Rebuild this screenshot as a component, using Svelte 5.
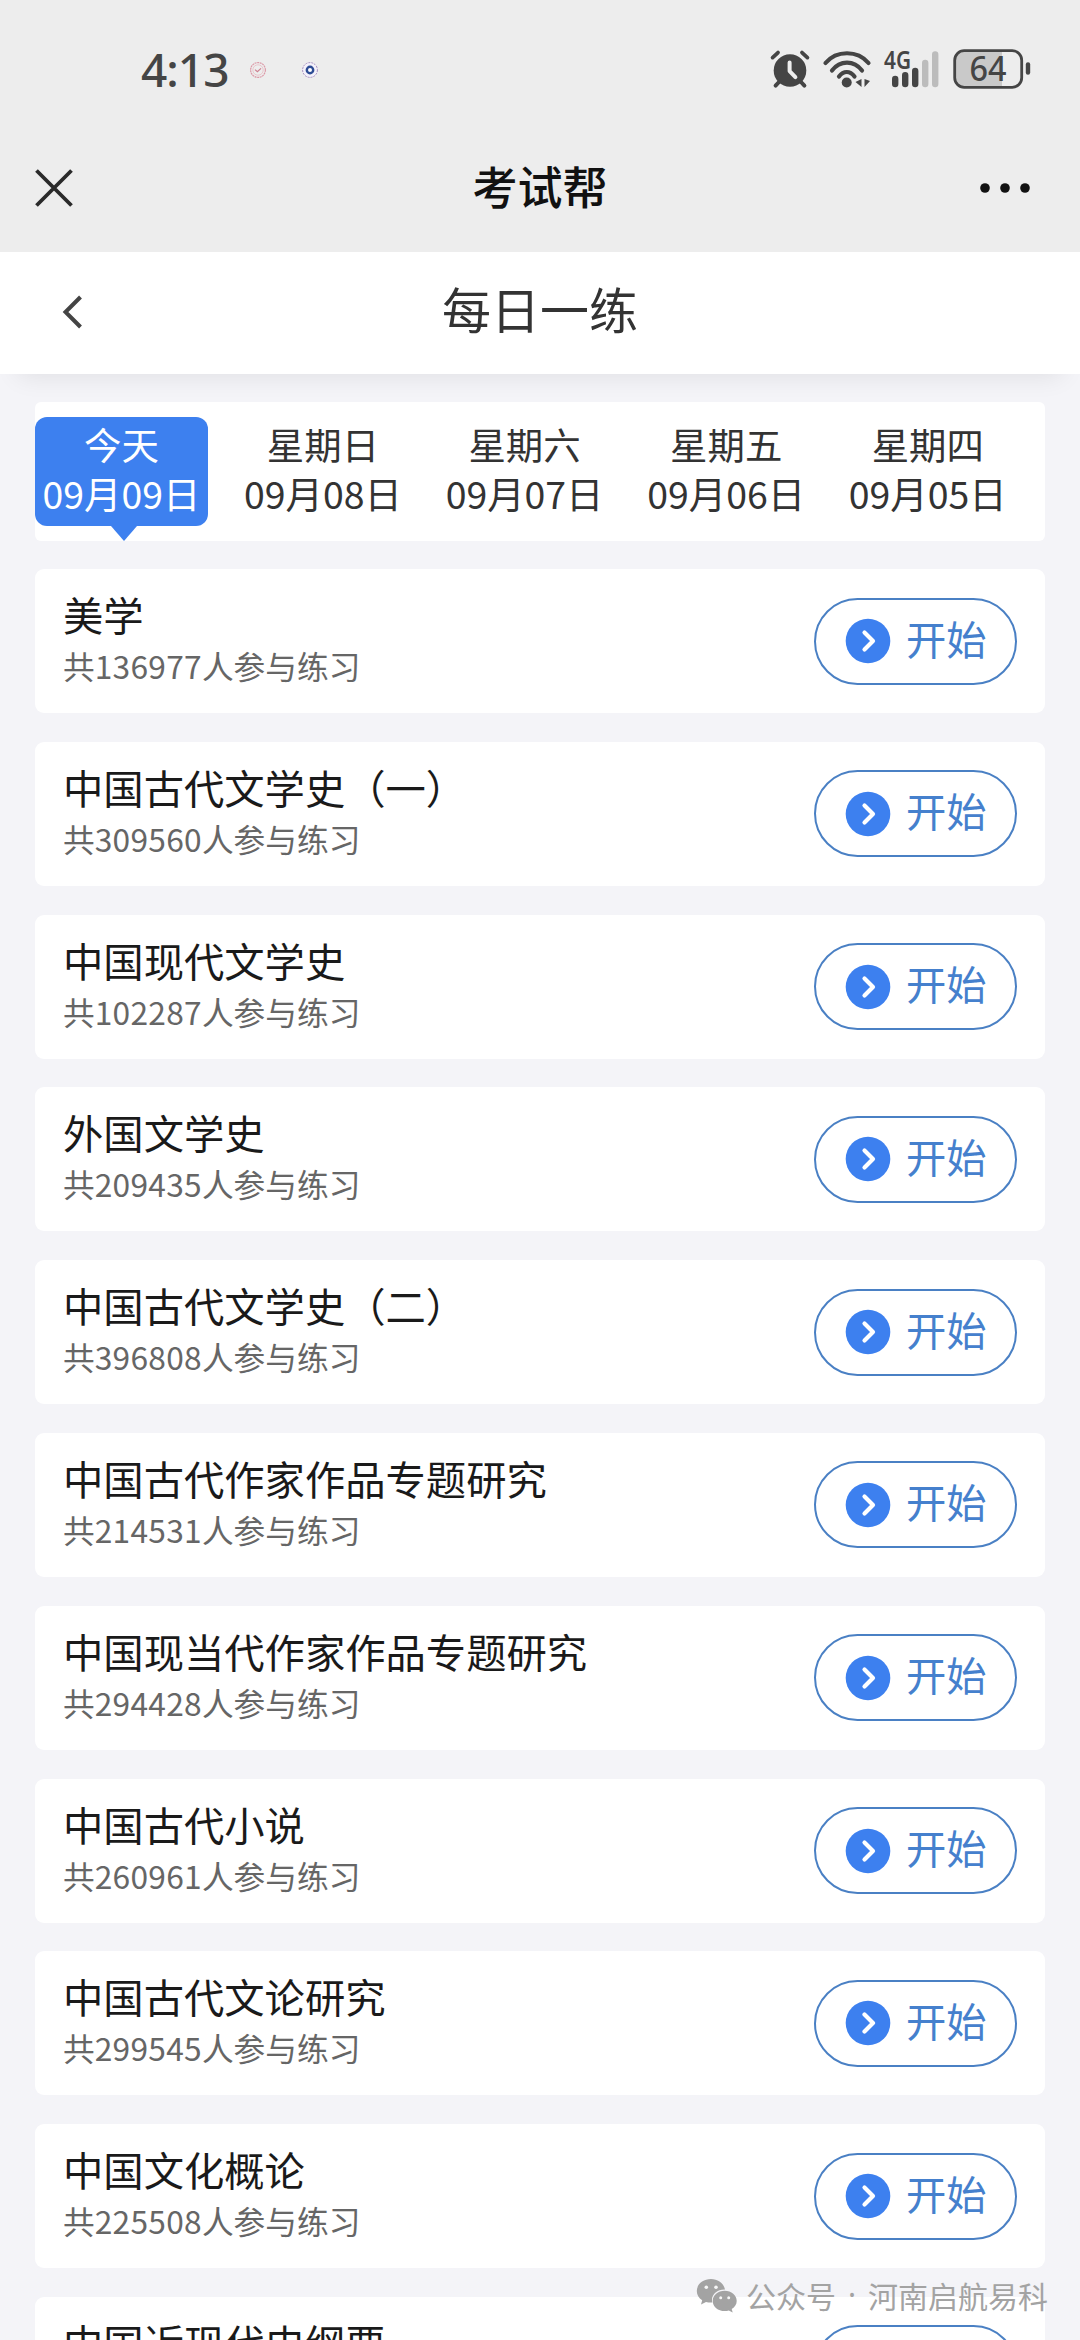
<script>
	const days = [
		{ name: '今天', date: '09月09日' },
		{ name: '星期日', date: '09月08日' },
		{ name: '星期六', date: '09月07日' },
		{ name: '星期五', date: '09月06日' },
		{ name: '星期四', date: '09月05日' }
	];

	const courses = [
		{ title: '美学', count: 136977 },
		{ title: '中国古代文学史（一）', count: 309560 },
		{ title: '中国现代文学史', count: 102287 },
		{ title: '外国文学史', count: 209435 },
		{ title: '中国古代文学史（二）', count: 396808 },
		{ title: '中国古代作家作品专题研究', count: 214531 },
		{ title: '中国现当代作家作品专题研究', count: 294428 },
		{ title: '中国古代小说', count: 260961 },
		{ title: '中国古代文论研究', count: 299545 },
		{ title: '中国文化概论', count: 225508 },
		{ title: '中国近现代史纲要' }
	];

	let selected = $state(0);
</script>

<div class="page">
	<div class="status-bar">
		<span class="time">4:13</span>
		<svg class="notice" width="18" height="18" viewBox="0 0 18 18" fill="none">
			<circle cx="9" cy="9" r="7.4" stroke="#dc9aa8" stroke-width="1.2" stroke-dasharray="2 .6" />
			<circle cx="9" cy="9" r="5.2" stroke="#e9bcc4" stroke-width="0.8" />
			<path d="M6 8.6l2.4 2.2L12 7.4" stroke="#cf7f90" stroke-width="1.2" />
		</svg>
		<svg class="notice second" width="18" height="18" viewBox="0 0 18 18" fill="none">
			<circle cx="9" cy="9" r="7.4" fill="#f4f1fa" stroke="#a58fc0" stroke-width="1" stroke-dasharray="2 1" />
			<circle cx="9" cy="9" r="3.2" fill="#fff" stroke="#2d4c94" stroke-width="2.4" />
		</svg>

		<div class="status-icons">
			<svg width="40" height="40" viewBox="0 0 40 40" fill="none" stroke="#454545" stroke-linecap="round">
				<circle cx="20" cy="21.5" r="16.3" fill="#454545" stroke="none" />
				<path d="M2.6 8.6L8 3.6M37.4 8.6L32 3.6" stroke-width="3.8" />
				<path d="M9 33l-3.4 3.6M31 33l3.4 3.6" stroke-width="4" />
				<path d="M19.6 13.5v8.6l5.8 6" stroke="#eee" stroke-width="4" stroke-linejoin="round" />
			</svg>
			<svg class="wifi" width="48" height="38" viewBox="0 0 48 38" fill="none" stroke="#454545" stroke-linecap="round">
				<path d="M2.500 13C13.500 0 34.500 0 45.500 13" stroke-width="4.200" />
				<path d="M9 20.500C17 10 31 10 39 20.500" stroke-width="4.200" />
				<path d="M16 26.500C20.500 20.500 27 20.500 31.500 26.500" stroke-width="4.200" />
				<circle cx="23.700" cy="32.500" r="5" fill="#454545" stroke="none" />
				<path d="M38.500 29v8l-6-5zM41.500 29v8l5.500-6z" fill="#454545" stroke="none" />
			</svg>
			<svg class="signal" width="56" height="38" viewBox="0 0 56 38">
				<text x="0" y="19" textLength="27" lengthAdjust="spacingAndGlyphs">4G</text>
				<g stroke-width="6.400" stroke-linecap="round">
					<path d="M11.200 29v5M21.200 25.200v8.800M31.200 21v13" stroke="#454545" />
					<path d="M41.200 13v21M51.200 4.500v29.500" stroke="#bcbcbc" />
				</g>
			</svg>
			<svg class="battery" width="78" height="40" viewBox="0 0 78 40">
				<path d="M10 2.500h39v35H10a8 8 0 0 1-8-8v-19a8 8 0 0 1 8-8z" fill="#c9c9c9" />
				<rect x="1.700" y="1.700" width="67" height="36.600" rx="9.500" fill="none" stroke="#454545" stroke-width="2.800" />
				<path d="M75 15.500v8" stroke="#454545" stroke-width="4.400" stroke-linecap="round" />
				<text x="16.500" y="32" textLength="37" lengthAdjust="spacingAndGlyphs">64</text>
			</svg>
		</div>
	</div>

	<header class="app-bar">
		<button class="icon-button close" aria-label="关闭">
			<svg width="40" height="40" viewBox="0 0 40 40" fill="none" stroke="#2a2a2a" stroke-width="3.800">
				<path d="M2.500 2.500l35 35M37.500 2.500l-35 35" />
			</svg>
		</button>
		<h1>考试帮</h1>
		<button class="icon-button more" aria-label="更多">
			<svg width="52" height="12" viewBox="0 0 52 12" fill="#111">
				<circle cx="6" cy="6" r="4.800" />
				<circle cx="26" cy="6" r="4.800" />
				<circle cx="46" cy="6" r="4.800" />
			</svg>
		</button>
	</header>

	<header class="nav-bar">
		<button class="icon-button back" aria-label="返回">
			<svg width="22" height="36" viewBox="0 0 22 36" fill="none" stroke="#444" stroke-width="4">
				<path d="M19.500 3L4.500 18l15 15" />
			</svg>
		</button>
		<h2>每日一练</h2>
	</header>

	<main>
		<div class="days">
			{#each days as day, i}
				<button class="day" class:active={selected === i} onclick={() => (selected = i)}>
					<span>{day.name}</span>
					<span>{day.date}</span>
				</button>
			{/each}
		</div>

		<ul class="courses">
			{#each courses as course}
				<li class="course">
					<div class="info">
						<h3>{course.title}</h3>
						<p>
							{#if course.count}共<span class="count">{course.count}</span>人参与练习{/if}
						</p>
					</div>
					<button class="start">
						<svg width="46" height="46" viewBox="0 0 46 46" fill="none">
							<circle cx="23" cy="23" r="22.300" fill="#3d80ef" />
							<path d="M19.500 14.500l8.500 8.500-8.500 8.500" stroke="#fff" stroke-width="4.200" stroke-linecap="round" stroke-linejoin="round" />
						</svg>
						<span>开始</span>
					</button>
				</li>
			{/each}
		</ul>
	</main>

	<div class="watermark">
		<svg width="42" height="34" viewBox="0 0 42 34" fill="#a3a3a3">
			<path d="M15 1C7 1 .8 6.200.8 13c0 3.900 2 7 5.400 9.300L5 26.500l5-2.600c1.600.5 3.300.7 5 .7h1.300C14.500 17 21 11.200 29 11.600 27.800 5.400 22 1 15 1z" />
			<path d="M28.700 12.800c-6.700 0-12 4.500-12 10.100s5.300 10.100 12 10.100c1.400 0 2.800-.2 4.100-.6l3.900 2-1-3.400c3.100-2 5-4.800 5-8.100 0-5.600-5.300-10.100-12-10.100z" />
			<g fill="#f7f7f7">
				<circle cx="10.300" cy="9.300" r="1.800" />
				<circle cx="20" cy="9.300" r="1.800" />
				<circle cx="24.700" cy="19.700" r="1.500" />
				<circle cx="32.700" cy="19.700" r="1.500" />
			</g>
		</svg>
		<span>公众号</span>
		<span class="dot">·</span>
		<span>河南启航易科</span>
	</div>
</div>

<style>
	:global(body) {
		margin: 0;
	}

	.page {
		position: relative;
		width: 1080px;
		height: 2340px;
		overflow: hidden;
		background: #f4f4f8;
		color: #333;
		font-family: 'Noto Sans CJK SC', sans-serif;
	}

	h1,
	h2,
	h3,
	p,
	ul {
		margin: 0;
		padding: 0;
	}

	button {
		padding: 0;
		border: 0;
		background: none;
		color: inherit;
		font: inherit;
	}

	svg {
		display: block;
		flex: none;
		overflow: visible;
	}

	/* Status bar */
	.status-bar {
		display: flex;
		align-items: center;
		box-sizing: border-box;
		height: 140px;
		padding: 0 49px 2px 141px;
		background: #ededed;
	}

	.time {
		width: 108px;
		font-family: 'Noto Sans', sans-serif;
		font-size: 46px;
		font-weight: 500;
		letter-spacing: -1px;
		color: #454545;
	}

	.notice {
		margin-top: 2px;
	}

	.notice.second {
		margin-left: 34px;
	}

	.status-icons {
		display: flex;
		align-items: center;
		margin-left: auto;
	}

	.wifi,
	.signal,
	.battery {
		margin-left: 13px;
	}

	.status-bar text {
		font-family: 'Noto Sans', sans-serif;
		fill: #454545;
	}

	.signal text {
		font-size: 25px;
		font-weight: 600;
	}

	.battery text {
		font-size: 34px;
		font-weight: 500;
	}

	/* Title bars */
	.app-bar,
	.nav-bar {
		display: grid;
		grid-template-columns: 200px 1fr 200px;
		align-items: center;
		text-align: center;
	}

	.app-bar {
		height: 112px;
		background: #ededed;
	}

	.icon-button {
		display: flex;
		align-items: center;
	}

	.close {
		padding: 0 0 17px 34px;
	}

	.more {
		justify-content: flex-end;
		padding: 0 49px 17px 0;
	}

	h1 {
		padding-bottom: 20px;
		font-size: 45px;
		font-weight: 500;
		line-height: 60px;
		color: #111;
	}

	.nav-bar {
		height: 122px;
		background: #fff;
		box-shadow: 0 20px 24px -18px rgba(0, 0, 0, 0.09);
	}

	.back {
		padding: 0 0 2px 61px;
	}

	h2 {
		padding-bottom: 10px;
		font-size: 48.960px;
		font-weight: 400;
		line-height: 60px;
		color: #333;
	}

	/* Date picker */
	main {
		padding: 28px 35px 0;
	}

	.days {
		display: flex;
		gap: 28.800px;
		box-sizing: border-box;
		height: 139px;
		padding-top: 15px;
		border-radius: 6px;
		background: #fff;
	}

	.day {
		position: relative;
		display: flex;
		flex-direction: column;
		align-items: center;
		box-sizing: border-box;
		width: 172.800px;
		height: 109px;
		padding-top: 3px;
		border-radius: 12px;
		font-size: 37.440px;
		line-height: 49px;
		white-space: nowrap;
	}

	.day.active {
		background: #3d80ef;
		color: #fff;
	}

	.day.active::after {
		content: '';
		position: absolute;
		top: 100%;
		left: 76px;
		border: 13px solid transparent;
		border-top: 15px solid #3d80ef;
		border-bottom: 0;
	}

	/* Course list */
	.courses {
		display: flex;
		flex-direction: column;
		gap: 28.800px;
		margin-top: 28px;
		list-style: none;
	}

	.course {
		display: flex;
		align-items: center;
		justify-content: space-between;
		box-sizing: border-box;
		height: 144px;
		padding: 0 28px;
		border-radius: 9px;
		background: #fff;
	}

	.info {
		padding-bottom: 4px;
	}

	h3 {
		font-size: 40.320px;
		font-weight: 400;
		line-height: 52px;
		color: #1a1a1a;
	}

	p {
		height: 50px;
		font-size: 31.680px;
		line-height: 50px;
		color: #666;
	}

	.count {
		letter-spacing: 0.3px;
	}

	.start {
		display: flex;
		align-items: center;
		box-sizing: border-box;
		width: 203px;
		height: 87px;
		padding-left: 29px;
		border: 2px solid #4a80c4;
		border-radius: 44px;
		font-size: 40.320px;
		line-height: 56px;
		color: #4580cd;
	}

	.start span {
		margin: -7px 0 0 15px;
	}

	.watermark {
		position: absolute;
		top: 2273px;
		left: 696px;
		display: flex;
		align-items: center;
		font-size: 30px;
		line-height: 44px;
		color: #a3a3a3;
	}

	.watermark svg {
		margin-right: 8px;
	}

	.dot {
		width: 32px;
		font-family: 'Noto Sans', sans-serif;
		text-align: center;
	}
</style>
